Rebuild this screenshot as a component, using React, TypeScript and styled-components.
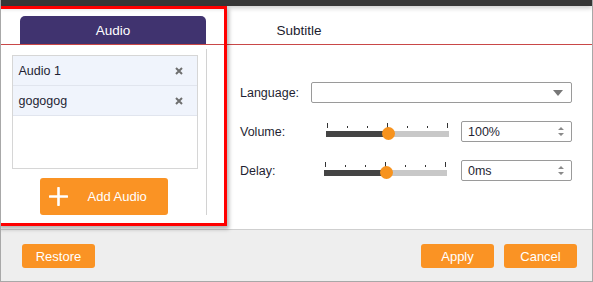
import React from 'react';
import styled, { createGlobalStyle } from 'styled-components';

const GlobalStyle = createGlobalStyle`
  html, body {
    margin: 0;
    padding: 0;
    background: #ffffff;
  }
  body {
    font-family: "Liberation Sans", Arial, sans-serif;
    font-size: 12px;
    color: #1f1f33;
  }
`;

const Window = styled.div`
  position: relative;
  width: 593px;
  height: 282px;
  box-sizing: border-box;
  border-left: 1px solid #a8a8a8;
  border-right: 1px solid #a8a8a8;
  border-bottom: 1px solid #a8a8a8;
  display: flex;
  flex-direction: column;
  overflow: hidden;
  background: #fff;
`;

const TopBar = styled.div`
  height: 6px;
  flex-shrink: 0;
  background: #363636;
  box-shadow: 0 2px 5px rgba(0, 0, 0, 0.22);
  position: relative;
  z-index: 1;
`;

const TabBar = styled.div`
  display: flex;
  height: 38px;
  padding-left: 19px;
  align-items: flex-end;
  border-bottom: 1px solid #c94848;
  flex-shrink: 0;
`;

const Tab = styled.div<{ active?: boolean }>`
  width: 186px;
  height: 28px;
  display: flex;
  align-items: center;
  justify-content: center;
  font-size: 13.5px;
  border-radius: 5px 5px 0 0;
  background: ${({ active }) => active ? '#40336f' : 'transparent'};
  color: ${({ active }) => active ? '#ffffff' : '#1c1c2e'};
`;

const Body = styled.div`
  flex: 1;
  display: flex;
`;

const LeftPane = styled.div`
  width: 206px;
  margin: 4px 0 14px;
  border-right: 1px solid #d2d2d2;
  display: flex;
  flex-direction: column;
  align-items: center;
  padding-top: 6px;
  box-sizing: border-box;
`;

const AudioList = styled.div`
  width: 186px;
  height: 114px;
  box-sizing: border-box;
  border: 1px solid #d6d6d6;
  margin-left: 2px;
  background: #fff;
`;

const AudioRow = styled.div`
  height: 30px;
  box-sizing: border-box;
  border-bottom: 1px solid #e1e5ee;
  background: #f0f4fc;
  display: flex;
  align-items: center;
  justify-content: space-between;
  padding: 0 14px 0 6px;
  font-size: 12.5px;
  color: #1f1f33;
`;

const AddButton = styled.div`
  margin-top: 9px;
  width: 128px;
  height: 37px;
  border-radius: 3px;
  background: #fa9324;
  color: #fff;
  display: flex;
  align-items: center;
  font-size: 13px;
  padding-left: 9px;
  box-sizing: border-box;
  gap: 20px;
`;

const RightPane = styled.div`
  flex: 1;
  padding: 37px 0 0 33px;
`;

const Form = styled.div`
  display: grid;
  grid-template-columns: 71px 261px;
  grid-auto-rows: 21px;
  row-gap: 18px;
  align-items: center;
`;

const Label = styled.div`
  font-size: 12.5px;
  color: #1f1f33;
`;

const SelectBox = styled.div`
  height: 21px;
  box-sizing: border-box;
  border: 1px solid #9a9a9a;
  border-radius: 2px;
  display: flex;
  align-items: center;
  justify-content: flex-end;
  padding-right: 8px;
`;

const ControlRow = styled.div`
  display: flex;
  align-items: center;
  height: 21px;
`;

const Slider = styled.div<{ offset: number }>`
  margin-left: ${({ offset }) => offset}px;
  width: 123px;
  height: 21px;
  display: flex;
  flex-direction: column;
  padding-top: 2px;
  box-sizing: border-box;
`;

const Ticks = styled.div`
  display: flex;
  justify-content: space-between;
  align-items: flex-end;
  height: 5px;
  padding: 0 1px;
`;

const Tick = styled.div<{ major?: boolean }>`
  width: 1px;
  height: ${({ major }) => major ? '5px' : '2px'};
  background: #333;
`;

const Track = styled.div`
  position: relative;
  margin-top: 3px;
  height: 6px;
  background: #c8c8c8;
`;

const TrackFill = styled.div`
  height: 100%;
  background: #444444;
`;

const Thumb = styled.div`
  position: absolute;
  top: -4px;
  width: 13px;
  height: 13px;
  margin-left: -6px;
  border-radius: 50%;
  background: #f7931e;
`;

const NumberBox = styled.div`
  margin-left: auto;
  width: 111px;
  height: 21px;
  box-sizing: border-box;
  border: 1px solid #9a9a9a;
  border-radius: 2px;
  display: flex;
  align-items: center;
  justify-content: space-between;
  padding: 0 7px 0 6px;
  font-size: 12.5px;
  color: #1f1f33;
`;

const Footer = styled.div`
  height: 52px;
  flex-shrink: 0;
  box-sizing: border-box;
  background: #eeeeee;
  border-top: 1px solid #cfcfcf;
  display: flex;
  align-items: flex-start;
  padding: 14px 15px 0 21px;
  gap: 10px;
`;

const FooterButton = styled.div<{ push?: boolean }>`
  width: 73px;
  height: 24px;
  border-radius: 3px;
  background: #fa9324;
  color: #fff;
  font-size: 13px;
  display: flex;
  align-items: center;
  justify-content: center;
  margin-left: ${({ push }) => push ? 'auto' : '0'};
`;

const Highlight = styled.div`
  position: absolute;
  left: -4px;
  top: 6px;
  width: 230px;
  height: 220px;
  box-sizing: border-box;
  border: 3px solid #ff0000;
  box-shadow: 2px 3px 4px rgba(0, 0, 0, 0.3);
  pointer-events: none;
  z-index: 2;
`;

const CloseIcon = () => (
  <svg width="8" height="8" viewBox="0 0 8 8">
    <path d="M1 1 L7 7 M7 1 L1 7" stroke="#6f6f6f" strokeWidth="2" />
  </svg>
);

const PlusIcon = () => (
  <svg width="19" height="19" viewBox="0 0 19 19">
    <path d="M9.5 1 V18 M1 9.5 H18" stroke="#fff" strokeWidth="2.6" strokeLinecap="round" />
  </svg>
);

const Caret = () => (
  <svg width="10" height="6" viewBox="0 0 10 6">
    <path d="M0 0 H10 L5 6 Z" fill="#777" />
  </svg>
);

const Spinner = () => (
  <svg width="6" height="11" viewBox="0 0 6 11">
    <path d="M0 4 L3 1 L6 4 Z M0 7 L3 10 L6 7 Z" fill="#8a8a8a" />
  </svg>
);

const RangeSlider = ({ offset, value }: { offset: number; value: number }) => (
  <Slider offset={offset}>
    <Ticks>
      {[0, 1, 2, 3, 4, 5, 6].map(i => <Tick key={i} major={i % 3 === 0} />)}
    </Ticks>
    <Track>
      <TrackFill style={{ width: `${value}%` }} />
      <Thumb style={{ left: `${value}%` }} />
    </Track>
  </Slider>
);

const tracks = ['Audio 1', 'gogogog'];

export default function App() {
  return (
    <>
      <GlobalStyle />
      <Window>
        <TopBar />
        <TabBar>
          <Tab active>Audio</Tab>
          <Tab>Subtitle</Tab>
        </TabBar>
        <Body>
          <LeftPane>
            <AudioList>
              {tracks.map(name => (
                <AudioRow key={name}>
                  <span>{name}</span>
                  <CloseIcon />
                </AudioRow>
              ))}
            </AudioList>
            <AddButton>
              <PlusIcon />
              <span>Add Audio</span>
            </AddButton>
          </LeftPane>
          <RightPane>
            <Form>
              <Label>Language:</Label>
              <SelectBox><Caret /></SelectBox>
              <Label>Volume:</Label>
              <ControlRow>
                <RangeSlider offset={15} value={50} />
                <NumberBox><span>100%</span><Spinner /></NumberBox>
              </ControlRow>
              <Label>Delay:</Label>
              <ControlRow>
                <RangeSlider offset={13} value={50} />
                <NumberBox><span>0ms</span><Spinner /></NumberBox>
              </ControlRow>
            </Form>
          </RightPane>
        </Body>
        <Footer>
          <FooterButton>Restore</FooterButton>
          <FooterButton push>Apply</FooterButton>
          <FooterButton>Cancel</FooterButton>
        </Footer>
        <Highlight />
      </Window>
    </>
  );
}
